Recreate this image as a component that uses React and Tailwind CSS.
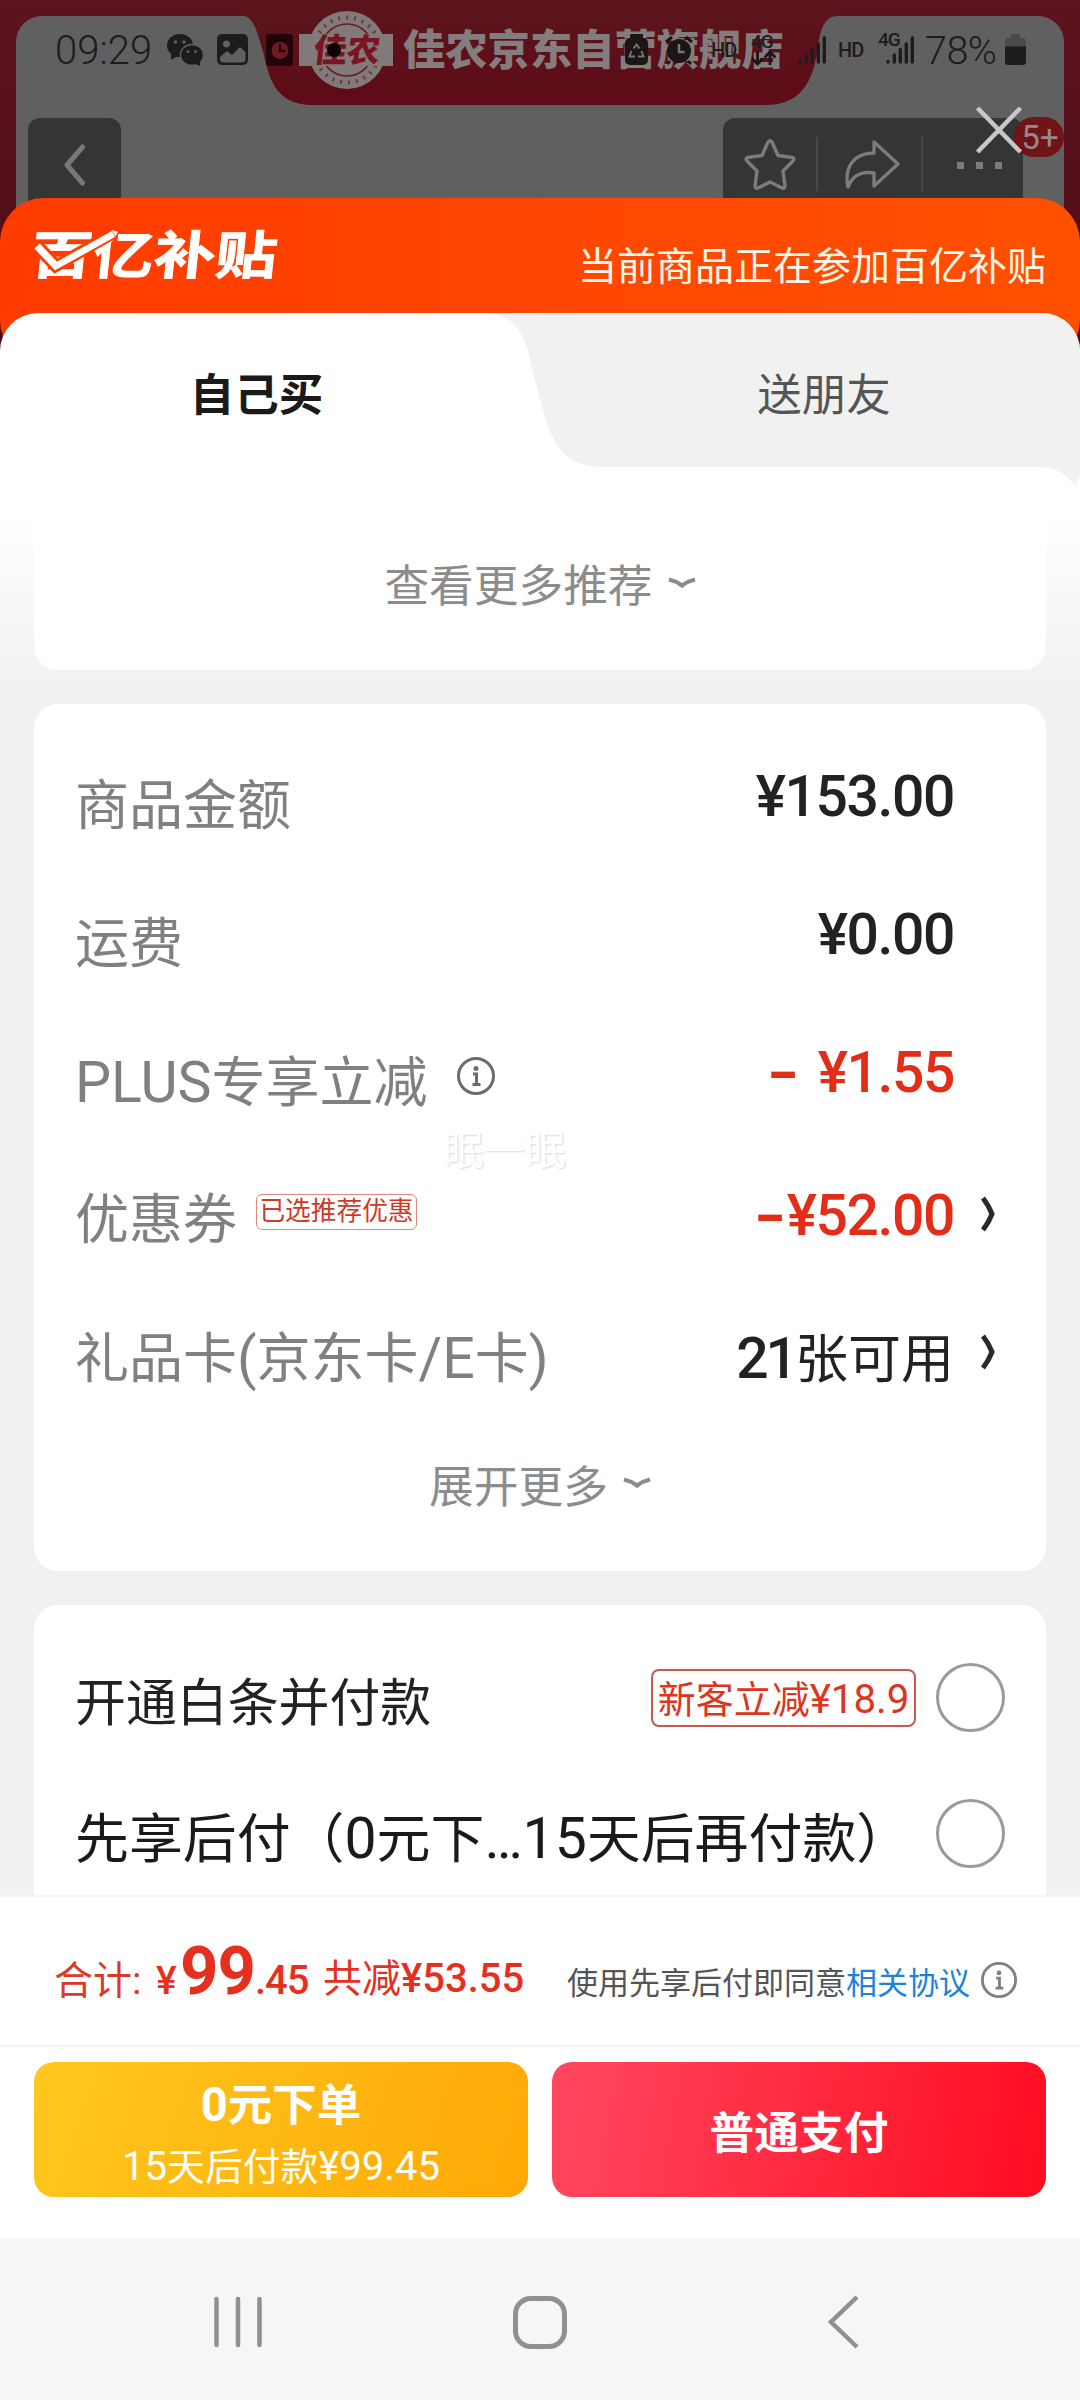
import React, { useState } from 'react';

const amountRows = [
  { id: 'goods', label: '商品金额', value: '¥153.00' },
  { id: 'freight', label: '运费', value: '¥0.00' },
  { id: 'plus', label: 'PLUS专享立减', sign: '-', signGap: true, value: '¥1.55', red: true, info: true },
  { id: 'coupon', label: '优惠券', tag: '已选推荐优惠', sign: '-', value: '¥52.00', red: true, arrow: true },
  { id: 'gift', label: '礼品卡(京东卡/E卡)', count: '21', value: '张可用', arrow: true },
];

// Latin letters and digits sit a little larger than the Chinese glyphs next to them
function Mixed({ text }) {
  return text.split(/([A-Z0-9()/.…¥]+)/).map((part, i) =>
    i % 2 ? (
      <span key={i} className="text-[1.06em]">
        {part}
      </span>
    ) : (
      part
    )
  );
}

function InfoIcon({ className }) {
  return (
    <svg viewBox="0 0 40 40" fill="none" stroke="currentColor" className={className}>
      <circle cx="20" cy="20" r="17.5" strokeWidth="3" />
      <circle cx="20" cy="12.5" r="2.5" fill="currentColor" stroke="none" />
      <path d="M17 18H20.5V28M16.500 28.5H24.500" strokeWidth="3" />
    </svg>
  );
}

function DownIcon() {
  return (
    <svg viewBox="0 0 28 12" fill="none" stroke="#8c8c8c" strokeWidth="4.2" className="mb-2.5 h-3 w-7">
      <path d="M1 2.500Q8 4 14 8.500Q20 4 27 2.500" />
    </svg>
  );
}

function Signal() {
  return (
    <svg viewBox="0 0 28 28" className="h-7 w-7" stroke="#1c1c1c" strokeWidth="3.4" strokeLinecap="round">
      <path d="M2 25.5V26M8.3 19V26M14.3 13.5V26M20.3 8V26M26.3 2V26" />
    </svg>
  );
}

function StatusBar() {
  return (
    <div className="absolute inset-x-0 top-[30px] flex h-10 items-center text-[#1c1c1c]">
      <span className="ml-[55px] w-[112px] pt-px text-[40px] leading-none font-light">09:29</span>
      <svg viewBox="0 0 36 32" className="h-8 w-9">
        <ellipse cx="13" cy="11.5" rx="13" ry="11.5" fill="#1c1c1c" />
        <path d="M4 18L4 26L12 21Z" fill="#1c1c1c" />
        <circle cx="8.5" cy="8" r="1.8" fill="#606060" />
        <circle cx="17" cy="8" r="1.8" fill="#606060" />
        <ellipse cx="25" cy="21" rx="11.6" ry="10.5" fill="#1c1c1c" stroke="#606060" strokeWidth="1.4" />
        <path d="M26 29L33 32L33 26Z" fill="#1c1c1c" />
        <circle cx="21" cy="17.5" r="1.5" fill="#606060" />
        <circle cx="28.5" cy="17.5" r="1.5" fill="#606060" />
      </svg>
      <svg viewBox="0 0 32 32" className="ml-3.5 h-8 w-8">
        <rect width="31" height="31" rx="5" fill="#1c1c1c" />
        <circle cx="9.5" cy="10" r="3.5" fill="#606060" />
        <path d="M3 23L10 17L15 21L23 13L28.5 18V25Q28.5 28.5 25 28.5H6.500Q3 28.500 3 25Z" fill="#606060" />
      </svg>
      <svg viewBox="0 0 27 32" className="ml-[17px] h-8 w-[27px]">
        <rect width="27" height="32" rx="3" fill="#210509" />
        <circle cx="14" cy="16.500" r="8.500" fill="#701a22" />
        <path d="M14 10V17H19.500" fill="none" stroke="#210509" strokeWidth="2.6" />
      </svg>
      <svg viewBox="0 0 23 32" className="ml-[332px] h-8 w-[23px]">
        <rect x="5" width="13" height="5" rx="1" fill="#1c1616" />
        <rect y="4" width="23" height="27" rx="5" fill="#1c1616" />
        <path d="M8.500 14.500L11.500 10.500L14.500 14.500M16.500 17L18.500 22.500H13M10 22.500H4.500L6.500 17" fill="none" stroke="#7a7475" strokeWidth="1.900" />
      </svg>
      <svg viewBox="0 0 30 30" className="ml-4 h-[30px] w-[30px]">
        <path d="M2 7L8 2M28 7L22 2M6 26L3 29M24 26L27 29" stroke="#1c1416" strokeWidth="3" />
        <circle cx="15" cy="16" r="12" fill="#1c1416" />
        <path d="M15 9V17H20.500" fill="none" stroke="#777" strokeWidth="2.4" />
      </svg>
      <span className="ml-[17px] w-10 text-[20px] leading-none font-medium tracking-[-1px]">HD</span>
      <div className="flex w-[47px] flex-col items-start">
        <span className="text-[19px] leading-[16px] font-medium tracking-tighter">4G</span>
        <svg viewBox="0 0 26 16" className="h-4 w-[26px]" fill="none" stroke="#1c1416" strokeWidth="2.8">
          <path d="M6.500 1V14M1 8.500L6.500 14L12 8.500M19 15V2M13.500 7.500L19 2L24.500 7.500" />
        </svg>
      </div>
      <Signal />
      <span className="ml-3 w-10 text-[20px] leading-none font-medium tracking-[-1px]">HD</span>
      <div className="relative w-[47px] pl-[8px]">
        <span className="absolute -top-1 left-0 text-[19px] leading-[16px] font-medium tracking-tighter">4G</span>
        <Signal />
      </div>
      <span className="w-[80px] pt-px text-[39.500px] leading-none font-light tracking-[-0.500px]">78%</span>
      <svg viewBox="0 0 21 32" className="h-8 w-[21px]">
        <path d="M6 0H15V4H18Q21 4 21 7V13H0V7Q0 4 3 4H6Z" fill="#4b4b4b" />
        <path d="M0 12.500H21V28Q21 31 18 31H3Q0 31 0 28Z" fill="#1c1c1c" />
      </svg>
    </div>
  );
}

function ProductBackdrop() {
  return (
    <div className="relative h-[360px] shrink-0 bg-linear-to-b from-[#5c131d] to-[#4d0b18] px-4 pt-4">
      <div className="h-full rounded-t-[26px] bg-[#606060]" />
      <svg viewBox="0 0 600 105" className="absolute top-0 left-[240px] h-[105px] w-[600px]">
        <defs>
          <linearGradient id="banner" x1="0" y1="0" x2="0" y2="1">
            <stop offset="0" stopColor="#5b151d" />
            <stop offset="1" stopColor="#5e0b17" />
          </linearGradient>
        </defs>
        <path d="M0 0V16H4C14 18 17 32 22 48C28 68 30 105 72 105H526C560 105 573 82 577 52C580 32 583 16 598 16V0Z" fill="url(#banner)" />
      </svg>
      <div className="absolute top-[28px] left-[299px] flex items-center gap-2.5">
        <div className="relative h-11 w-[94px]">
          <svg viewBox="0 0 94 82" className="absolute -top-[19px] left-0 h-[82px] w-[94px]">
            <circle cx="48" cy="41" r="39" fill="#827a7a" />
            <circle cx="48" cy="41" r="26" fill="none" stroke="#6b1820" strokeWidth="1.500" />
            <circle cx="48" cy="41" r="32.500" fill="none" stroke="#6b3a40" strokeWidth="4" strokeDasharray="2 6" />
            <rect y="25" width="94" height="32" fill="#827a7a" />
          </svg>
          <span className="absolute top-[6px] left-[15px] -skew-x-6 text-[33px] leading-none font-black text-[#7a1420]">佳农</span>
          <span className="absolute top-[15px] left-[28px] h-3.5 w-3.5 rounded-full bg-[#0b0406]" />
        </div>
        <span className="pt-0.5 text-[42.300px] leading-[42px] font-black whitespace-nowrap text-[#857c7d]">佳农京东自营旗舰店</span>
      </div>
      <StatusBar />

      <div className="absolute inset-x-7 top-[118px] flex justify-between">
        <div className="flex h-[110px] w-[93px] justify-center rounded-t-xl bg-[#353535] pt-[26px]">
          <svg viewBox="0 0 22 42" className="h-[42px] w-[22px]" fill="none" stroke="#777" strokeWidth="5" strokeLinecap="round" strokeLinejoin="round">
            <path d="M18.500 3L3 21L18.500 39" />
          </svg>
        </div>
        <div className="mr-[29px] flex h-[110px] w-[300px] rounded-t-xl bg-[#353535] pt-[19px]">
          <div className="flex h-[54px] w-[95px] items-center justify-center border-r-2 border-[#484848]">
            <svg viewBox="0 0 52 52" className="h-[52px] w-[52px]" fill="none" stroke="#7c7c7c" strokeWidth="3.400" strokeLinejoin="round">
              <path d="M24 4Q26 1.500 28 4L34 17.500L48.500 19.500Q51 20.500 49 23L39 33L41 48Q40.500 51 38 50L26 44L14 50Q11.500 51 11 48L13 33L3 23Q1 20.500 3.500 19.500L18 17.500Z" />
            </svg>
          </div>
          <div className="flex h-[54px] w-[105px] items-center justify-center border-r-2 border-[#484848] pl-1">
            <svg viewBox="0 0 56 50" className="h-[50px] w-14" fill="none" stroke="#7c7c7c" strokeWidth="3.400" strokeLinejoin="round">
              <path d="M30 3L54 25L30 47V34C17 32 9 36 4 48C0 29 9 14 30 14Z" />
            </svg>
          </div>
          <div className="ml-[34px] flex h-[56px] items-center gap-3">
            <span className="h-[7px] w-[7px] bg-[#7c7c7c]" />
            <span className="h-[7px] w-[7px] bg-[#7c7c7c]" />
            <span className="h-[7px] w-[7px] bg-[#7c7c7c]" />
          </div>
        </div>
      </div>
      <span className="absolute top-[117px] left-[1014px] flex h-10 w-[50px] items-center justify-center rounded-full bg-[#701417] pl-0.5 text-[33px] leading-none text-[#968888]">5+</span>
      <svg viewBox="0 0 48 50" className="absolute top-[105px] left-[975px] h-[50px] w-12" stroke="#c8c8c8" strokeWidth="4.500">
        <path d="M2.500 3L45.500 47M45.500 3L2.500 47" />
      </svg>
    </div>
  );
}

function SubsidyLogo() {
  return (
    <div className="relative -skew-x-6 text-[61.500px] leading-[61px] font-bold text-white">
      <span className="block origin-left scale-y-[0.84] [-webkit-text-stroke:1px_white]">百亿补贴</span>
      <svg viewBox="0 0 90 60" className="absolute top-0 left-0 h-[60px] w-[90px]" fill="none">
        <path d="M5 20L26 40L80 7" stroke="#ff3e00" strokeWidth="12.500" />
        <path d="M5 20L26 40L80 8" stroke="#fff" strokeWidth="7" />
      </svg>
    </div>
  );
}

function Tabs({ active, onChange }) {
  return (
    <div className="relative h-[174px] overflow-hidden rounded-t-[38px] bg-white">
      <svg viewBox="0 0 1080 174" className="absolute inset-0 h-[174px] w-[1080px]">
        <path d="M488 0C512 2 523 18 529 42C536 72 541 92 548 112C556 138 572 154 602 154H1040Q1062 154 1075 173L1080 163V0Z" fill="#f1f1f1" />
      </svg>
      <div className="relative flex h-[154px] items-center pt-3 text-[44.500px] leading-none">
        <button onClick={() => onChange('self')} className={`w-[513px] ${active === 'self' ? 'font-bold text-[#1a1a1a]' : 'text-[#555]'}`}>
          自己买
        </button>
        <button onClick={() => onChange('friend')} className={`ml-[55px] w-[512px] ${active === 'friend' ? 'font-bold text-[#1a1a1a]' : 'text-[#555]'}`}>
          送朋友
        </button>
      </div>
    </div>
  );
}

function AmountCard() {
  return (
    <div className="relative mt-[34px] h-[867px] rounded-[24px] bg-white pt-8">
      {amountRows.map((row) => (
        <div key={row.id} className="flex h-[138px] items-center pr-[51px] pl-[41px]">
          <span className="pt-1 text-[54px] leading-none text-[#808080]">
            <Mixed text={row.label} />
          </span>
          {row.info && <InfoIcon className="mb-2.5 ml-7 h-10 w-10 text-[#6c6c6c]" />}
          {row.tag && (
            <span className="mb-3.5 ml-[19px] flex h-9 w-[161px] items-center justify-center rounded-md border-[1.500px] border-[#e0887d] text-[25.700px] leading-none whitespace-nowrap text-[#cf3a26]">
              {row.tag}
            </span>
          )}
          <span
            className={`ml-auto flex items-baseline text-[57px] leading-none ${row.count ? 'pt-0.5' : 'font-medium tracking-[-1.400px]'} ${
              row.tag ? 'mb-2' : row.count ? '' : 'mb-[18px]'
            } ${row.red ? 'text-[#e22d18]' : 'text-[#222]'}`}
          >
            {row.sign && (
              <span className={`inline-block origin-right scale-x-[1.5] font-bold ${row.signGap ? 'mr-[20px]' : 'mr-0.5'}`}>{row.sign}</span>
            )}
            {row.count && <span className="font-medium tracking-[-3px]">{row.count}</span>}
            <span className={row.count ? 'text-[53px]' : ''}>{row.value}</span>
          </span>
          <span className="flex w-[41px] justify-end">
            {row.arrow && (
              <svg viewBox="0 0 14 36" className="mb-2.5 h-9 w-3.5" fill="none" stroke="#2a2a2a" strokeWidth="5">
                <path d="M2 2Q8 10 11 18Q8 26 2 34" />
              </svg>
            )}
          </span>
        </div>
      ))}
      <button className="mt-[40px] flex w-full items-center justify-center gap-[15px] text-[44.700px] leading-none text-[#8c8c8c]">
        展开更多
        <DownIcon />
      </button>
      <span className="absolute top-[427px] left-[409px] text-[41px] leading-none text-white [text-shadow:1px_1px_2px_#d8d8d8]">眠一眠</span>
    </div>
  );
}

function Radio({ checked, onClick }) {
  return (
    <button
      onClick={onClick}
      className={`mb-2 h-[69px] w-[69px] shrink-0 rounded-full border-3 border-[#9a9a9a] ${checked ? 'bg-[#e22d18]' : 'bg-white'}`}
    />
  );
}

function PayCard() {
  const [method, setMethod] = useState('');

  return (
    <div className="mt-[34px] h-[290px] rounded-t-[24px] bg-white pt-[28px] pr-[41px] pl-[41px]">
      <div className="flex h-[136px] items-center">
        <span className="pt-1.5 text-[50.900px] leading-none text-[#222]">开通白条并付款</span>
        <span className="mb-1.5 ml-auto flex h-[58px] w-[265px] items-center justify-center rounded-lg border-2 border-[#c65a4c] pt-1 text-[38px] leading-none whitespace-nowrap text-[#dc3520]">
          <Mixed text="新客立减¥18.9" />
        </span>
        <span className="ml-[20px]">
          <Radio checked={method === 'baitiao'} onClick={() => setMethod('baitiao')} />
        </span>
      </div>
      <div className="flex h-[136px] items-center justify-between">
        <span className="pt-1 text-[53.900px] leading-none whitespace-nowrap text-[#1a1a1a]">
          <Mixed text="先享后付（0元下…15天后再付款）" />
        </span>
        <Radio checked={method === 'later'} onClick={() => setMethod('later')} />
      </div>
    </div>
  );
}

function BottomBar() {
  return (
    <div className="h-[343px] shrink-0 border-t-2 border-[#f4f4f4] bg-white">
      <div className="flex h-[150px] items-center border-b-2 border-[#f5f5f5] pr-[62px] pl-[54px]">
        <div className="flex items-baseline text-[39px] leading-none whitespace-nowrap text-[#e5301f]">
          <span className="w-[102px] text-[#d93a2b]">合计:</span>
          <span className="w-[24px] font-medium">¥</span>
          <span className="text-[67px] leading-none font-bold tracking-[-1px]">99</span>
          <span className="w-[68px] text-[40px] font-medium tracking-[-1px]">.45</span>
          <span className="relative -top-0.5 text-[39px]">共减</span>
          <span className="relative -top-0.5 text-[40px] font-medium">¥53.55</span>
        </div>
        <div className="mt-6 ml-auto flex items-center text-[31px] leading-none whitespace-nowrap text-[#555]">
          使用先享后付即同意
          <a className="text-[#1c82dc]">相关协议</a>
          <InfoIcon className="mb-1.5 ml-2.5 h-[38px] w-[38px] text-[#808080]" />
        </div>
      </div>
      <div className="flex gap-6 px-[34px] pt-[15px] text-white">
        <button className="flex h-[135px] flex-1 flex-col items-center rounded-[20px] bg-linear-[110deg] from-[#fec81e] to-[#ffa806] pt-[20px]">
          <span className="text-[44.500px] leading-none font-bold">
            <Mixed text="0元下单" />
          </span>
          <span className="mt-[18px] text-[37.800px] leading-none">
            <Mixed text="15天后付款¥99.45" />
          </span>
        </button>
        <button className="flex h-[135px] flex-1 items-center justify-center rounded-[20px] bg-linear-[100deg] from-[#ff4860] to-[#ff0c20] pt-2.5 text-[44.700px] leading-none font-bold">
          普通支付
        </button>
      </div>
    </div>
  );
}

function NavBar() {
  return (
    <div className="flex h-[162px] shrink-0 items-center bg-[#f6f6f6] pt-[6px] text-[#909090]">
      <svg viewBox="0 0 52 52" className="ml-[212px] h-[52px] w-[52px]" stroke="currentColor" strokeWidth="4.500" strokeLinecap="round">
        <path d="M4.500 3V49M26 3V49M47.500 3V49" />
      </svg>
      <span className="ml-[249px] h-[53px] w-[54px] rounded-[18px] border-[5px] border-current" />
      <svg viewBox="0 0 32 54" className="ml-[260px] h-[54px] w-8" fill="none" stroke="currentColor" strokeWidth="4.500">
        <path d="M30 2L4 27L30 52" />
      </svg>
    </div>
  );
}

export default function App() {
  const [tab, setTab] = useState('self');

  return (
    <div className="flex h-[2400px] w-[1080px] flex-col overflow-hidden bg-[#f1f1f1] font-[Roboto,'Noto_Sans_CJK_SC',sans-serif]">
      <ProductBackdrop />

      {/* Checkout sheet */}
      <div className="relative -mt-[162px] flex h-[1697px] shrink-0 flex-col">
        <div className="flex h-[166px] shrink-0 justify-between rounded-[44px] bg-linear-to-r from-[#ff3b00] to-[#ff5000] pr-[34px] pl-[31px]">
          <div className="pt-[28px]">
            <SubsidyLogo />
          </div>
          <span className="pt-[50px] text-[39px] leading-none text-[#fff5e8]">当前商品正在参加百亿补贴</span>
        </div>
        <div className="-mt-[51px]">
          <Tabs active={tab} onChange={setTab} />
        </div>
        <div className="flex-1 bg-linear-to-b from-white from-[2%] to-[#f1f1f1] to-[14%] px-[34px]">
          <div className="flex h-[183px] items-center justify-center gap-[15px] rounded-b-[24px] bg-white pt-[18px] text-[44.700px] leading-none text-[#8c8c8c]">
            查看更多推荐
            <DownIcon />
          </div>
          <AmountCard />
          <PayCard />
        </div>
      </div>

      <BottomBar />
      <NavBar />
    </div>
  );
}
